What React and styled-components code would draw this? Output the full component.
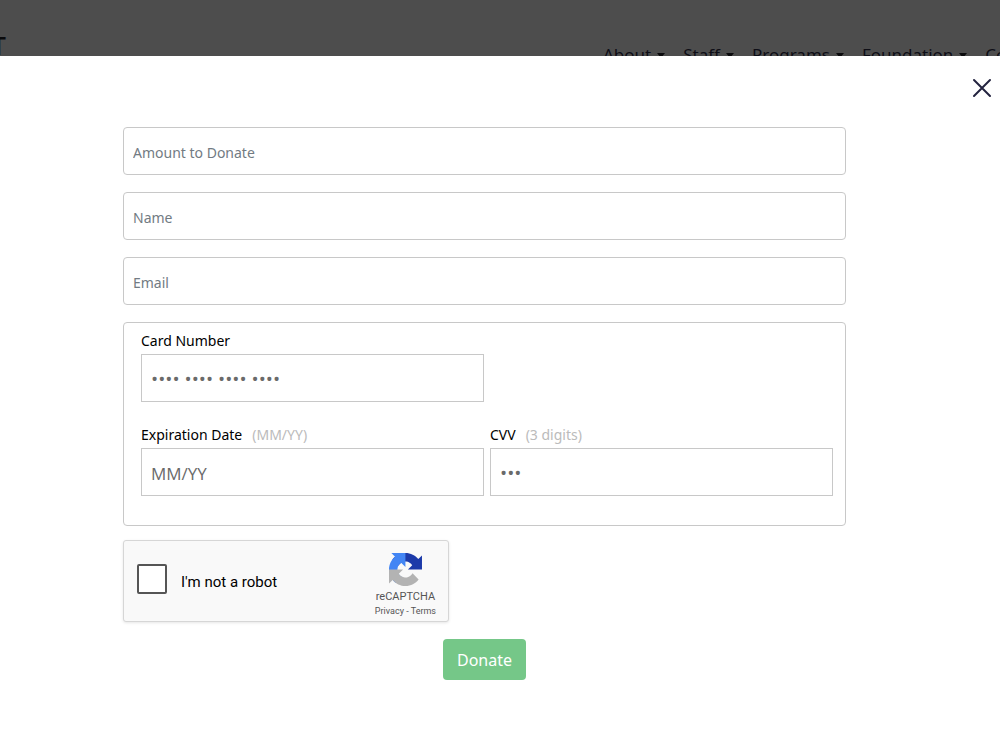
import React from 'react';
import styled, { createGlobalStyle } from 'styled-components';

const navItems = ['About', 'Staff', 'Programs', 'Foundation', 'Contact'];

const donorFields = [
  { id: 'amount', label: 'Amount to Donate', type: 'text' },
  { id: 'name', label: 'Name', type: 'text' },
  { id: 'email', label: 'Email', type: 'email' }
];

const RecaptchaLogo = () => (
  <svg width="33" height="33" viewBox="0 0 64 64" aria-hidden="true">
    <path
      fill="#1c3aa9"
      d="M64 31.955l-.033-1.37V4.687l-7.16 7.16C50.948 4.674 42.033.093 32.05.093c-10.4 0-19.622 4.96-25.458 12.64l11.736 11.86a15.55 15.55 0 0 1 4.754-5.334c2.05-1.6 4.952-2.906 8.968-2.906.485 0 .86.057 1.135.163 4.976.393 9.288 3.14 11.828 7.124l-8.307 8.307L64 31.953"
    />
    <path
      fill="#4285f4"
      d="M31.862.094l-1.37.033H4.594l7.16 7.16C4.58 13.147 0 22.06 0 32.046c0 10.4 4.96 19.622 12.64 25.458L24.5 45.768a15.55 15.55 0 0 1-5.334-4.754c-1.6-2.05-2.906-4.952-2.906-8.968 0-.485.057-.86.163-1.135.393-4.976 3.14-9.288 7.124-11.828l8.307 8.307L31.86.095"
    />
    <path
      fill="#b3b3b3"
      d="M.001 32.045l.033 1.37v25.898l7.16-7.16c5.86 7.173 14.774 11.754 24.76 11.754 10.4 0 19.622-4.96 25.458-12.64l-11.736-11.86a15.55 15.55 0 0 1-4.754 5.334c-2.05 1.6-4.952 2.906-8.968 2.906-.485 0-.86-.057-1.135-.163-4.976-.393-9.288-3.14-11.828-7.124l8.307-8.307c-10.522.04-22.4.066-27.295-.005"
    />
  </svg>
);

const App = () => {
  return (
    <>
      <GlobalStyle />
      <Header>
        <Brand href="#home">T</Brand>
        <Nav>
          {navItems.map((item) => (
            <NavLink key={item} href={`#${item.toLowerCase()}`}>
              {item}
              <Caret />
            </NavLink>
          ))}
        </Nav>
      </Header>

      <Modal role="dialog" aria-label="Donate">
        <CloseRow>
          <CloseButton type="button" aria-label="Close">
            <svg width="20" height="20" viewBox="0 0 20 20" fill="none" stroke="#23233f" strokeWidth="2">
              <path d="M2 2l16 16M18 2L2 18" strokeLinecap="round" />
            </svg>
          </CloseButton>
        </CloseRow>

        <Form onSubmit={(e) => e.preventDefault()}>
          {donorFields.map((field) => (
            <TextInput
              key={field.id}
              id={field.id}
              type={field.type}
              placeholder={field.label}
              aria-label={field.label}
            />
          ))}

          <CardBox>
            <Field>
              <Label htmlFor="card-number">Card Number</Label>
              <CardInput id="card-number" placeholder="•••• •••• •••• ••••" $masked />
            </Field>
            <Field $firstColumn>
              <Label htmlFor="expiration">
                Expiration Date <Hint>(MM/YY)</Hint>
              </Label>
              <CardInput id="expiration" placeholder="MM/YY" />
            </Field>
            <Field>
              <Label htmlFor="cvv">
                CVV <Hint>(3 digits)</Hint>
              </Label>
              <CardInput id="cvv" placeholder="•••" $masked />
            </Field>
          </CardBox>

          <Captcha>
            <CaptchaCheck>
              <Checkbox type="checkbox" id="robot" />
              <CaptchaLabel htmlFor="robot">I'm not a robot</CaptchaLabel>
            </CaptchaCheck>
            <CaptchaBrand>
              <RecaptchaLogo />
              <CaptchaName>reCAPTCHA</CaptchaName>
              <CaptchaLinks>
                <a href="#privacy">Privacy</a> - <a href="#terms">Terms</a>
              </CaptchaLinks>
            </CaptchaBrand>
          </Captcha>

          <DonateButton type="submit">Donate</DonateButton>
        </Form>
      </Modal>
    </>
  );
};

const GlobalStyle = createGlobalStyle`
  * {
    box-sizing: border-box;
  }

  body {
    margin: 0;
    background: #fff;
    font-family: 'Open Sans', 'Noto Sans', sans-serif;
    overflow-x: hidden;
  }
`;

const Header = styled.header`
  display: flex;
  justify-content: space-between;
  height: 56px;
  overflow: hidden;
  background: #4d4d4d;
`;

const Brand = styled.a`
  display: flex;
  justify-content: flex-end;
  width: 6px;
  padding-top: 26px;
  color: #0a0a0c;
  font-size: 26px;
  font-weight: 600;
  line-height: 38px;
  text-decoration: none;
`;

const Nav = styled.nav`
  display: flex;
  gap: 18px;
  flex: 0 0 397px;
  min-width: 0;
  padding-top: 43px;
`;

const NavLink = styled.a`
  display: flex;
  align-items: center;
  gap: 6px;
  height: 24px;
  color: #0e0e16;
  font-family: 'Noto Sans', 'Open Sans', sans-serif;
  font-size: 17px;
  line-height: 24px;
  text-decoration: none;
`;

const Caret = styled.span`
  border-top: 5px solid #0a0a0c;
  border-left: 4px solid transparent;
  border-right: 4px solid transparent;
`;

const Modal = styled.main`
  background: #fff;
  padding-bottom: 32px;
`;

const CloseRow = styled.div`
  display: flex;
  justify-content: flex-end;
  padding: 22px 8px 29px;
`;

const CloseButton = styled.button`
  display: flex;
  padding: 0;
  border: none;
  background: none;
  cursor: pointer;
`;

const Form = styled.form`
  display: flex;
  flex-direction: column;
  gap: 17px;
  padding: 0 154px 0 123px;
`;

const TextInput = styled.input`
  width: 100%;
  height: 48px;
  padding: 2px 9px 0;
  border: 1px solid #c8c8c8;
  border-radius: 4px;
  font-family: 'Noto Sans', 'Open Sans', sans-serif;
  font-size: 14px;

  &::placeholder {
    color: #727b83;
  }
`;

const CardBox = styled.div`
  display: grid;
  grid-template-columns: 1fr 1fr;
  gap: 20px 6px;
  padding: 5px 12px 29px 17px;
  border: 1px solid #c8c8c8;
  border-radius: 4px;
`;

const Field = styled.div`
  grid-column: ${(props) => (props.$firstColumn ? '1' : 'auto')};
`;

const Label = styled.label`
  display: flex;
  align-items: baseline;
  gap: 10px;
  height: 26px;
  color: #000;
  font-family: 'Noto Sans', 'Open Sans', sans-serif;
  font-size: 14px;
  line-height: 25px;
`;

const Hint = styled.span`
  color: #bbb;
`;

const CardInput = styled.input`
  display: block;
  width: 100%;
  height: 48px;
  padding: 2px 9px 0;
  border: 1px solid #c8c8c8;
  border-radius: 0;
  font-family: inherit;
  font-size: ${(props) => (props.$masked ? '19px' : '17px')};

  &::placeholder {
    color: #6a6a6a;
  }
`;

const Captcha = styled.div`
  display: flex;
  justify-content: space-between;
  width: 326px;
  max-width: 100%;
  height: 82px;
  margin-top: -3px;
  padding: 11px 12px 0 13px;
  border: 1px solid #d6d6d6;
  border-radius: 3px;
  background: #f9f9f9;
  box-shadow: 0 1px 3px rgba(0, 0, 0, 0.1);
`;

const CaptchaCheck = styled.div`
  display: flex;
  align-items: center;
  gap: 14px;
  height: 54px;
`;

const Checkbox = styled.input`
  appearance: none;
  width: 30px;
  height: 30px;
  margin: 0;
  border: 2px solid #555;
  border-radius: 2px;
  background: #fff;
`;

const CaptchaLabel = styled.label`
  padding-top: 5px;
  color: #000;
  font-family: Roboto, sans-serif;
  font-size: 15px;
  line-height: 20px;
`;

const CaptchaBrand = styled.div`
  display: flex;
  flex-direction: column;
  align-items: center;
  padding-top: 1px;
  color: #555;
  font-family: Roboto, sans-serif;
`;

const CaptchaName = styled.div`
  margin-top: 4px;
  font-size: 11px;
  line-height: 14px;
`;

const CaptchaLinks = styled.div`
  font-size: 9px;
  line-height: 14px;

  a {
    color: inherit;
    text-decoration: none;
  }
`;

const DonateButton = styled.button`
  align-self: center;
  padding: 9px 14px 7px;
  border: none;
  border-radius: 4px;
  background: #75c788;
  color: #fff;
  font-family: 'Noto Sans', 'Open Sans', sans-serif;
  font-size: 16px;
  line-height: 25px;
  cursor: pointer;
`;

export default App;
